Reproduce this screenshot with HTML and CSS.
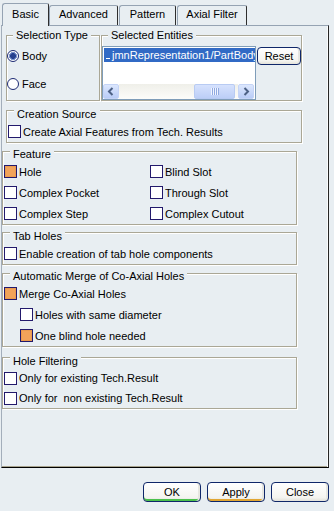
FILE: index.html
```html
<!DOCTYPE html>
<html lang="en">
<head>
  <meta charset="UTF-8" />
  <meta name="viewport" content="width=device-width, initial-scale=1.0"/>
  <title>Axial Features</title>
  <link rel="stylesheet" href="styles.css">
</head>
<body>

<div class="dialog">
  <div class="tabs">
    <div class="tab tab-basic active">Basic</div>
    <div class="tab tab-advanced">Advanced</div>
    <div class="tab tab-pattern">Pattern</div>
    <div class="tab tab-axial">Axial Filter</div>
  </div>

  <div class="panel">
    <div class="upper">
      <div class="top-row">
        <div class="group sel-type">
          <span class="group-title">Selection Type</span>
          <div class="radio-row"><span class="radio checked"></span>Body</div>
          <div class="radio-row"><span class="radio"></span>Face</div>
        </div>

        <div class="group sel-entities">
          <span class="group-title">Selected Entities</span>
          <div class="entities-body">
            <div class="listbox">
              <div class="list-item"><span class="focus-mark"></span>jmnRepresentation1/PartBody</div>
              <div class="hscroll">
                <span class="sb-btn">
                  <svg width="14" height="13" viewBox="0 0 14 13"><polyline points="8.5,3 5,6.5 8.5,10" fill="none" stroke="#4d6185" stroke-width="2"/></svg>
                </span>
                <span class="sb-track"><span class="sb-thumb"><span class="grip"></span></span></span>
                <span class="sb-btn">
                  <svg width="14" height="13" viewBox="0 0 14 13"><polyline points="5.5,3 9,6.5 5.5,10" fill="none" stroke="#4d6185" stroke-width="2"/></svg>
                </span>
              </div>
            </div>
            <button class="btn btn-reset">Reset</button>
          </div>
        </div>
      </div>

      <div class="group creation">
        <span class="group-title">Creation Source</span>
        <div class="check-row"><span class="check"></span>Create Axial Features from Tech. Results</div>
      </div>
    </div>

    <div class="lower">
      <div class="group feature">
        <span class="group-title">Feature</span>
        <div class="feature-grid">
          <div class="check-row"><span class="check checked"></span>Hole</div>
          <div class="check-row"><span class="check"></span>Blind Slot</div>
          <div class="check-row"><span class="check"></span>Complex Pocket</div>
          <div class="check-row"><span class="check"></span>Through Slot</div>
          <div class="check-row"><span class="check"></span>Complex Step</div>
          <div class="check-row"><span class="check"></span>Complex Cutout</div>
        </div>
      </div>

      <div class="group tab-holes">
        <span class="group-title">Tab Holes</span>
        <div class="check-row"><span class="check"></span>Enable creation of tab hole components</div>
      </div>

      <div class="group merge">
        <span class="group-title">Automatic Merge of Co-Axial Holes</span>
        <div class="check-row"><span class="check checked"></span>Merge Co-Axial Holes</div>
        <div class="check-row sub"><span class="check"></span>Holes with same diameter</div>
        <div class="check-row sub"><span class="check checked"></span>One blind hole needed</div>
      </div>

      <div class="group filtering">
        <span class="group-title">Hole Filtering</span>
        <div class="check-row"><span class="check"></span>Only for existing Tech.Result</div>
        <div class="check-row"><span class="check"></span>Only for &nbsp;non existing Tech.Result</div>
      </div>
    </div>
  </div>

  <div class="footer">
    <button class="btn btn-ok">OK</button>
    <button class="btn btn-apply">Apply</button>
    <button class="btn btn-close">Close</button>
  </div>
</div>

</body>
</html>
```

FILE: styles.css
```css
* {
  box-sizing: border-box;
}

html, body {
  margin: 0;
  background-color: #e8eef2;
}

body {
  font-family: "Liberation Sans", Arial, sans-serif;
  font-size: 11px;
  color: #000;
}

.dialog {
  width: 334px;
  height: 511px;
}

/* tab strip */
.tabs {
  display: flex;
  align-items: flex-end;
  height: 25px;
  padding-left: 2px;
}

.tab {
  height: 20px;
  padding-top: 2px;
  line-height: 13px;
  text-align: center;
  border: 1px solid #95a3b3;
  border-right-color: #2e2e2e;
  border-bottom: none;
  border-radius: 3px 2px 0 0;
}

.tab.active {
  position: relative;
  z-index: 1;
  height: 23px;
  padding-top: 4px;
  margin-bottom: -1px;
  background-color: #e8eef2;
}

.tab-basic { width: 47px; }
.tab-advanced { width: 69px; }
.tab-pattern { width: 57px; margin-left: 1px; }
.tab-axial { width: 70px; margin-left: 1px; }

/* main panel */
.panel {
  margin-left: 1px;
  width: 328px;
  height: 443px;
  border: 1px solid #95a3b3;
  border-left-color: #a3aebb;
  border-right-color: #262626;
  border-bottom-color: #000;
  box-shadow: inset -1px 0 0 #fbfcfd, inset 0 -1px 0 #a8a48f;
}

.upper {
  padding-left: 4px;
}

.top-row {
  display: flex;
  margin-top: 9px;
}

/* etched group box */
.group {
  border: 1px solid #aaa796;
  box-shadow: 1px 1px 0 #fff, inset 1px 1px 0 #fff;
}

.group-title {
  display: table;
  margin: -7px 0 0 6px;
  padding: 0 3px;
  line-height: 13px;
  background-color: #e8eef2;
}

.sel-type {
  width: 94px;
  padding-bottom: 2px;
}

.radio-row {
  display: flex;
  align-items: center;
  gap: 3px;
  height: 28px;
}

.radio {
  width: 12px;
  height: 12px;
  border: 1px solid #1d2a73;
  border-radius: 50%;
  background-color: #fff;
}

.radio.checked {
  background: radial-gradient(circle, #26408f 0 2.6px, #7f97cf 3.2px 3.8px, #fff 4.3px);
}

.sel-entities {
  width: 201px;
  margin-left: 1px;
}

.entities-body {
  display: flex;
  align-items: flex-start;
  padding-top: 4px;
}

.listbox {
  display: flex;
  flex-direction: column;
  justify-content: space-between;
  width: 154px;
  height: 54px;
  border: 1px solid #7f9db9;
  background-color: #fff;
  overflow: hidden;
}

.list-item {
  margin: 1px 0 0 1px;
  height: 14px;
  line-height: 14px;
  padding-left: 2px;
  white-space: nowrap;
  color: #fff;
  background-color: #316ac5;
}

.focus-mark {
  display: inline-block;
  width: 4px;
  height: 11px;
  margin-right: 2px;
  border-bottom: 1px solid #fff;
  vertical-align: top;
}

.hscroll {
  display: flex;
  height: 15px;
  margin: 0 1px 0 0;
}

.sb-btn {
  display: flex;
  align-items: center;
  justify-content: center;
  width: 16px;
  height: 15px;
  border: 1px solid #c5d4f6;
  border-radius: 2px;
  background: linear-gradient(#dce7fd, #b9ccf7);
}

.sb-track {
  flex: 1;
  display: flex;
  padding-left: 75px;
  background: linear-gradient(#efefe9, #fcfcfa);
}

.sb-thumb {
  display: flex;
  align-items: center;
  justify-content: center;
  width: 41px;
  height: 15px;
  border: 1px solid #b8cbf3;
  border-radius: 2px;
  background: linear-gradient(#d6e2fd, #bccef7);
}

.grip {
  width: 8px;
  height: 7px;
  background: repeating-linear-gradient(to right, #f1f5fe 0 1px, #90a9e0 1px 2px);
}

.btn {
  font-family: inherit;
  font-size: 11px;
  color: #000;
  padding: 0;
  border: 1px solid #0f2769;
  border-radius: 4px;
  background: linear-gradient(#fff, #f4f4f0 80%, #e3e2da);
  box-shadow: inset -2px 0 0 #e6e6e0;
}

.btn-reset {
  width: 44px;
  height: 18px;
  margin: 1px 0 0 1px;
}

.creation {
  width: 296px;
  margin-top: 9px;
  padding: 4px 0 0 1px;
}

.check-row {
  display: flex;
  align-items: center;
  gap: 2px;
  height: 21px;
}

.check {
  width: 13px;
  height: 13px;
  border: 1px solid #22196c;
  background-color: #fff;
}

.check.checked {
  background-color: #f2a35a;
  box-shadow: inset 0 0 0 1px #ea9a4e;
}

/* lower groups */
.lower .group {
  width: 295px;
  padding-left: 1px;
}

.feature {
  margin-top: 8px;
  padding-top: 3px;
}

.feature-grid {
  display: grid;
  grid-template-columns: 146px 1fr;
}

.tab-holes {
  margin-top: 7px;
  padding-top: 4px;
}

.merge {
  margin-top: 8px;
  padding-top: 3px;
}

.check-row.sub {
  padding-left: 16px;
}

.filtering {
  margin-top: 10px;
  padding-top: 4px;
}

.filtering .check-row {
  height: 20px;
}

/* bottom buttons */
.footer {
  display: flex;
  justify-content: flex-end;
  gap: 6px;
  padding: 14px 5px 0 0;
}

.footer .btn {
  width: 58px;
  height: 20px;
}

.btn-ok {
  box-shadow: inset -2px 0 0 #e6e6e0, inset 0 -2px 0 #4cc14c;
}

.btn-apply {
  box-shadow: inset -2px 0 0 #e6e6e0, inset 0 -2px 0 #e2a632;
}
```
